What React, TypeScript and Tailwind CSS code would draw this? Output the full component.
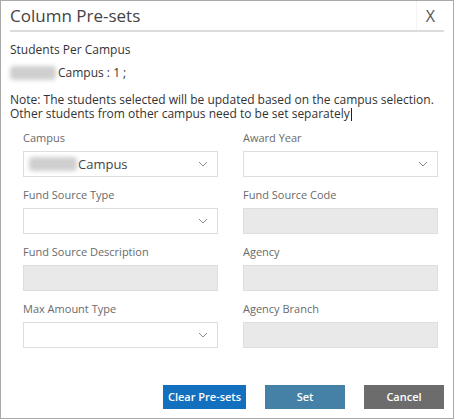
import React from "react";

function Chevron() {
  return (
    <svg width="10" height="6" viewBox="0 0 10 6" className="shrink-0">
      <path d="M1 1 L5 5 L9 1" fill="none" stroke="#8a8a8a" strokeWidth="1" />
    </svg>
  );
}

function Blur({ w }: { w: string }) {
  return <span className={`inline-block h-[14px] ${w} rounded-sm bg-[#cfcfcf] blur-[2px] align-middle`} />;
}

function Field({ label, kind, value }: { label: string; kind: "select" | "disabled"; value?: React.ReactNode }) {
  return (
    <div className="flex flex-col">
      <div className="h-[14px] text-[11px] leading-[14px] text-[#6a6a6a]">{label}</div>
      {kind === "select" ? (
        <div className="mt-[6px] flex h-[26px] items-center justify-between border border-[#dedede] bg-white pl-[5px] pr-[9px]">
          <div className="flex items-center text-[13px] text-[#444]">{value}</div>
          <Chevron />
        </div>
      ) : (
        <div className="mt-[6px] h-[26px] border border-[#dedede] bg-[#e9e9e9]" />
      )}
    </div>
  );
}

export default function App() {
  return (
    <div
      className="relative h-[419px] w-[454px] border border-[#a9a9a9] bg-white"
      style={{ fontFamily: '"Open Sans", "Noto Sans", sans-serif' }}
    >
      <div className="mx-[9px] flex h-[31px] items-center justify-between border-b-2 border-[#dcdcdc]">
        <div className="pt-[1px] text-[17px] text-[#444]">Column Pre-sets</div>
        <div className="flex h-full items-center border-l border-[#f3f3f3] pl-[9px] pr-[9px] text-[16px] text-[#555]">X</div>
      </div>
      <div className="px-[9px] pt-[10px] text-[12px] text-[#333]">
        <div className="h-[16px] leading-[16px]">Students Per Campus</div>
        <div className="mt-[7px] flex h-[16px] items-center leading-[16px]">
          <Blur w="w-[46px]" />
          <span className="ml-[2px]">Campus : 1 ;</span>
        </div>
        <div className="mt-[12px] leading-[14px]">
          Note: The students selected will be updated based on the campus selection.
          <br />
          Other students from other campus need to be set separately
          <span className="ml-[1px] inline-block h-[13px] w-px bg-[#222] align-middle" />
        </div>
      </div>
      <div className="mt-[10px] grid grid-cols-2 gap-x-[25px] gap-y-[11px] pl-[22px] pr-[15px]">
        <Field
          label="Campus"
          kind="select"
          value={
            <>
              <Blur w="w-[48px]" />
              <span className="ml-[1px]">Campus</span>
            </>
          }
        />
        <Field label="Award Year" kind="select" />
        <Field label="Fund Source Type" kind="select" />
        <Field label="Fund Source Code" kind="disabled" />
        <Field label="Fund Source Description" kind="disabled" />
        <Field label="Agency" kind="disabled" />
        <Field label="Max Amount Type" kind="select" />
        <Field label="Agency Branch" kind="disabled" />
      </div>
      <div className="mt-[37px] flex justify-end gap-[19px] pr-[9px]">
        <button className="h-[24px] w-[83px] bg-[#1270bf] text-[11px] font-semibold text-white">Clear Pre-sets</button>
        <button className="h-[24px] w-[80px] bg-[#4581a7] text-[11px] font-semibold text-white">Set</button>
        <button className="h-[24px] w-[80px] bg-[#6c6c6c] text-[11px] font-semibold text-white">Cancel</button>
      </div>
    </div>
  );
}
